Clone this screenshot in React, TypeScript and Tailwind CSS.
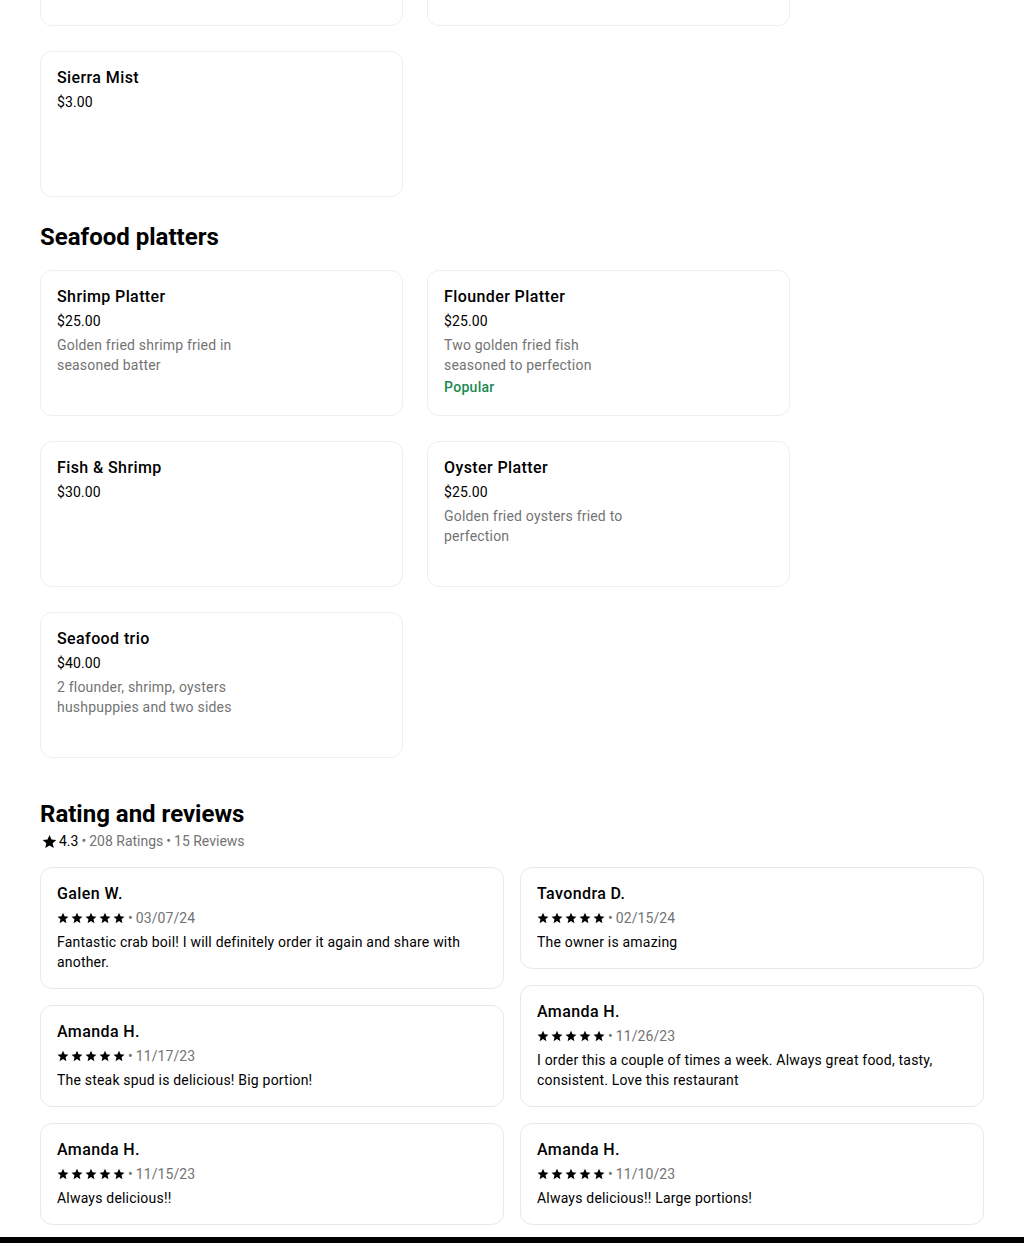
import React from "react";

type Item = { name: string; price: string; desc?: string[]; popular?: boolean };

const platters: Item[] = [
  { name: "Shrimp Platter", price: "$25.00", desc: ["Golden fried shrimp fried in", "seasoned batter"] },
  { name: "Flounder Platter", price: "$25.00", desc: ["Two golden fried fish", "seasoned to perfection"], popular: true },
  { name: "Fish & Shrimp", price: "$30.00" },
  { name: "Oyster Platter", price: "$25.00", desc: ["Golden fried oysters fried to", "perfection"] },
  { name: "Seafood trio", price: "$40.00", desc: ["2 flounder, shrimp, oysters", "hushpuppies and two sides"] },
];

type Review = { name: string; date: string; text: string };

const leftReviews: Review[] = [
  { name: "Galen W.", date: "03/07/24", text: "Fantastic crab boil! I will definitely order it again and share with another." },
  { name: "Amanda H.", date: "11/17/23", text: "The steak spud is delicious! Big portion!" },
  { name: "Amanda H.", date: "11/15/23", text: "Always delicious!!" },
];
const rightReviews: Review[] = [
  { name: "Tavondra D.", date: "02/15/24", text: "The owner is amazing" },
  { name: "Amanda H.", date: "11/26/23", text: "I order this a couple of times a week. Always great food, tasty, consistent. Love this restaurant" },
  { name: "Amanda H.", date: "11/10/23", text: "Always delicious!! Large portions!" },
];

function Star({ size }: { size: number }) {
  return (
    <svg width={size} height={size} viewBox="0 0 24 24" fill="#000">
      <path d="M12 1.5l3.1 7.2 7.8.7-5.9 5.2 1.8 7.7L12 18.2l-6.8 4.1 1.8-7.7-5.9-5.2 7.8-.7z" />
    </svg>
  );
}

function MenuCard({ item }: { item: Item }) {
  return (
    <div className="w-[363px] h-[146px] rounded-xl border border-[#eeeeee] px-4 pt-4 bg-white">
      <div className="text-base leading-5 font-medium text-black tracking-[0.4px]">{item.name}</div>
      <div className="mt-1 text-sm leading-5 text-black tracking-[0.1px]">{item.price}</div>
      {item.desc && (
        <div className="mt-1 text-sm leading-5 text-[#737373] tracking-[0.2px]">
          {item.desc.map((d) => (
            <div key={d}>{d}</div>
          ))}
        </div>
      )}
      {item.popular && (
        <div className="mt-0.5 text-sm leading-5 font-medium text-[#1a8a50] tracking-[0.3px]">Popular</div>
      )}
    </div>
  );
}

function ReviewCard({ r }: { r: Review }) {
  return (
    <div className="rounded-xl border border-[#e8e8e8] px-4 pt-4 pb-4 bg-white">
      <div className="text-base leading-5 font-medium text-black tracking-[0.4px]">{r.name}</div>
      <div className="mt-1 flex items-center h-5 text-sm leading-5">
        <div className="flex items-center gap-[2px]">
          {[0, 1, 2, 3, 4].map((i) => (
            <Star key={i} size={12} />
          ))}
        </div>
        <span className="text-[#737373] ml-[3px]">•</span>
        <span className="text-[#737373] ml-[3px] tracking-[0.1px]">{r.date}</span>
      </div>
      <div className="mt-1 text-sm leading-5 text-black tracking-[0.2px]">{r.text}</div>
    </div>
  );
}

export default function App() {
  return (
    <div className="bg-white min-h-[1243px] flex flex-col" style={{ fontFamily: "Roboto, 'Liberation Sans', sans-serif" }}>
      <div className="px-10 flex-1">
        {/* partial cards from previous section */}
        <div className="h-[26px] overflow-hidden">
          <div className="-mt-[120px] flex gap-[24px]">
            <div className="w-[363px] h-[146px] rounded-xl border border-[#eeeeee]" />
            <div className="w-[363px] h-[146px] rounded-xl border border-[#eeeeee]" />
          </div>
        </div>
        <div className="mt-[25px]">
          <MenuCard item={{ name: "Sierra Mist", price: "$3.00" }} />
        </div>

        <h2 className="mt-[24px] text-[24px] leading-8 font-bold text-black">Seafood platters</h2>
        <div className="mt-[17px] grid grid-cols-[363px_363px] gap-x-[24px] gap-y-[25px]">
          {platters.map((p) => (
            <MenuCard key={p.name} item={p} />
          ))}
        </div>

        <h2 className="mt-[40px] text-[24px] leading-8 font-bold text-black">Rating and reviews</h2>
        <div className="mt-[1px] flex items-center text-sm leading-5 text-[#737373]">
          <span className="ml-[2px] mr-[2px]">
            <Star size={15} />
          </span>
          <span className="text-black">4.3</span>
          <span className="mx-[3px]">•</span>
          <span>208 Ratings</span>
          <span className="mx-[3px]">•</span>
          <span>15 Reviews</span>
        </div>
        <div className="mt-[16px] flex gap-4">
          <div className="flex-1 flex flex-col gap-4">
            {leftReviews.map((r, i) => (
              <ReviewCard key={i} r={r} />
            ))}
          </div>
          <div className="flex-1 flex flex-col gap-4">
            {rightReviews.map((r, i) => (
              <ReviewCard key={i} r={r} />
            ))}
          </div>
        </div>
      </div>
      <div className="mt-[12px] h-[40px] bg-black" />
    </div>
  );
}
